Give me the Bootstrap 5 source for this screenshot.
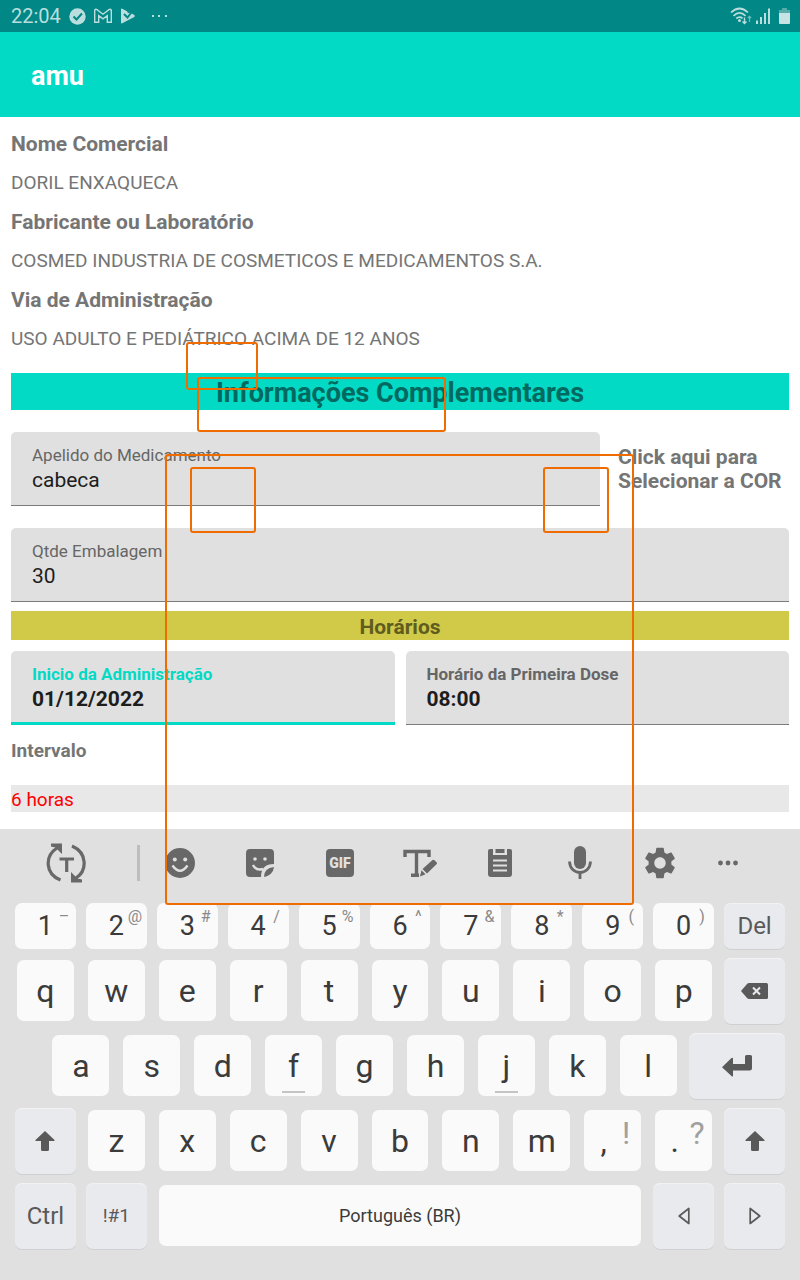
<!DOCTYPE html>
<html lang="pt-BR">
<head>
<meta charset="utf-8">
<meta name="viewport" content="width=device-width, initial-scale=1">
<title>amu</title>
<link href="https://cdn.jsdelivr.net/npm/bootstrap@5.3.0/dist/css/bootstrap.min.css" rel="stylesheet">
<style>
  body { font-family: Roboto, "Noto Sans", sans-serif; color: #757575; background: #fff; }
  svg { display: block; }
  .status-bar { height: 32px; background: #018786; color: #b9dedd; padding: 0 10px 0 11px; font-size: 20px; }
  .app-bar { height: 85px; background: #03dac5; padding: 2px 31px 0; color: #fff; }
  .app-title { font-size: 27px; line-height: 32px; font-weight: 700; }
  .page-body { padding: 7px 11px 17px; }
  .info-list dt { font-size: 21px; line-height: 39px; padding-top: 1px; font-weight: 700; }
  .info-list dd { font-size: 19px; line-height: 38px; margin: 0; }
  .banner-main { background: #03dac5; color: #01695f; font-size: 27px; line-height: 35px; padding-top: 3px; height: 37px; font-weight: 700; margin: 15px 0 22px; }
  .banner-sub { background: #d0ca48; color: #5f5c20; font-size: 21px; line-height: 29px; padding-top: 2px; height: 29px; font-weight: 700; margin: 9px 0 11px; }
  .filled { height: 74px; padding: 13px 21px 0; background: #e0e0e0; border-bottom: 1px solid #7b7b7b; border-radius: 5px 5px 0 0; min-width: 0; }
  .filled label { display: block; font-size: 17px; line-height: 20px; color: #666; white-space: nowrap; }
  .filled input { font-size: 21px; line-height: 30px; height: 30px; padding: 0; border: 0; border-radius: 0; background: transparent; color: #1d1d1d; }
  .filled input:focus { background: transparent; box-shadow: none; }
  .filled.strong label, .filled.strong input { font-weight: 700; }
  .filled.active { border-bottom: 3px solid #03dac5; }
  .filled.active label { color: #03dac5; }
  .name-row { gap: 18px; margin-bottom: 22px; }
  .name-field { flex: 1 1 0; }
  .color-link { flex: 0 0 171px; font-size: 21px; line-height: 24px; font-weight: 700; color: #757575; text-align: left; }
  .gap-field { gap: 11px; }
  .interval-label { display: block; font-size: 19px; line-height: 24px; font-weight: 700; margin: 14px 0 22px; }
  .interval-select { display: block; width: 100%; height: 27px; border: 0; padding: 2px 0 0; appearance: none; background: #e8e8e8; color: #f00; font-size: 19px; line-height: 25px; }

  .keyboard { background: #e0e0e0; padding-bottom: 26px; color: #3b3b3b; }
  .keyboard button { border: 0; padding: 0; color: inherit; background: transparent; }
  .tools { display: grid; grid-template-columns: 132fr 8fr repeat(7, 80fr) 56fr 44fr; height: 74px; padding-bottom: 6px; align-items: center; justify-items: center; color: #686868; }
  .tools-rule { width: 3px; height: 36px; background: #bdbdbd; justify-self: end; }
  .keys { display: grid; grid-template-columns: repeat(22, 1fr); grid-auto-rows: 75px; padding: 0 10px; }
  .keys-num { grid-auto-rows: 51px; }
  .keyboard .key { grid-column: span 2; position: relative; margin: 6px 7px 8px; border-radius: 7px; background: #fafafa; font-size: 32px; line-height: 40px; display: flex; align-items: center; justify-content: center; }
  .keyboard .keys-num .key { margin: 0 5px 5px; font-size: 27px; }
  .keyboard .key-fn { margin: 4px 5px 5px; background: #e9eaee; color: #595959; font-size: 24px; box-shadow: 0 1px 0 #cfd0d3, inset 0 1px 0 #f2f2f5; }
  .keyboard .keys-num .key-fn { font-size: 24px; }
  .keyboard .key-small { font-size: 19px; }
  .keyboard .key-space { grid-column: span 14; font-size: 18px; }
  .keyboard .key-enter { grid-column: span 3; }
  .keyboard .key-first { grid-column: 2 / span 2; }
  .keyboard .key-punct { padding-right: 18px; }
  .hint { position: absolute; top: 4px; right: 1px; width: 22px; text-align: center; font-size: 16px; line-height: 20px; color: #8a8a8a; }
  .key-punct .hint { top: 3px; right: 4px; font-size: 32px; line-height: 40px; color: #a0a0a0; }
  .home-mark::after { content: ""; position: absolute; left: 17px; right: 17px; bottom: 3px; height: 2px; background: #c4c4c4; }

  .region { position: absolute; border: 2px solid #ef6c00; border-radius: 3px; pointer-events: none; }
  .r1 { left: 186px; top: 342px; width: 72px; height: 48px; }
  .r2 { left: 197px; top: 377px; width: 249px; height: 55px; }
  .r3 { left: 165px; top: 454px; width: 469px; height: 451px; }
  .r4 { left: 190px; top: 467px; width: 66px; height: 66px; }
  .r5 { left: 543px; top: 467px; width: 66px; height: 66px; }
</style>
</head>
<body class="position-relative">

<header>
  <div class="status-bar d-flex align-items-center">
    <span>22:04</span>
    <svg class="ms-2" width="17" height="17" viewBox="0 0 17 17"><circle cx="8.500" cy="8.500" r="8.200" fill="#b9dedd"/><path d="M4.500 8.500l3 3 5.500-6" fill="none" stroke="#018786" stroke-width="2"/></svg>
    <svg class="ms-2" width="18" height="16" viewBox="0 0 18 16" fill="none" stroke="#b9dedd" stroke-width="1.400"><path d="M.7 14.300V2.200Q1.500.8 3 1.600L9 6.200 15 1.600Q16.500.8 17.300 2.200V14.300H13.300V7.600L9 10.900 4.700 7.600V14.300Z"/></svg>
    <svg class="ms-2" width="16" height="16" viewBox="0 0 16 16"><path d="M1 1.500Q1 0 2.300.8L7 3.200 8 5 10.500 4.800 14.300 7Q15.500 8 14.300 9L2.300 15.300Q1 16 1 14.500Z" fill="#b9dedd"/><path d="M4 6l3.500 3.500 5-6.500" fill="none" stroke="#018786" stroke-width="2"/></svg>
    <svg class="ms-3" width="16" height="4" viewBox="0 0 16 4" fill="#b9dedd"><path d="M0 1h2v2H0zM6 1h2v2H6zM13 1h2v2h-2z"/></svg>
    <svg class="ms-auto" width="22" height="18" viewBox="0 0 22 18" fill="none" stroke="#b9dedd" stroke-width="1.700"><path d="M1 5.500Q9.500-2.500 18 5.500M3.500 8.800Q9.500 3 15.500 8.800M6.300 11.500Q9.500 8.700 12.500 11.300"/><circle cx="9.500" cy="13.500" r="1.500" fill="#b9dedd" stroke="none"/><path d="M14.500 10.500v6M12.500 14.500l2 2 2-2" stroke-width="1.400"/><path d="M19.500 15V9.500M17.800 11l1.700-1.700L21.200 11" stroke="#6fbcba" stroke-width="1.200"/></svg>
    <svg class="ms-1" width="15" height="16" viewBox="0 0 15 16" fill="#b9dedd"><path d="M0 12.500h2V16H0zM4 9h2v7H4zM8 5h2v11H8zM12 .5h2V16h-2z"/></svg>
    <svg class="ms-2" width="11" height="18" viewBox="0 0 11 18"><path d="M3 1h5v2h3v4H0V3h3z" fill="#56acab"/><path d="M0 6h11v10q0 1-1 1H1q-1 0-1-1z" fill="#c6e4e4"/></svg>
  </div>
  <nav class="app-bar d-flex align-items-center"><h1 class="app-title m-0">amu</h1></nav>
</header>

<main class="page-body">
  <dl class="info-list m-0">
    <dt>Nome Comercial</dt><dd>DORIL ENXAQUECA</dd>
    <dt>Fabricante ou Laboratório</dt><dd>COSMED INDUSTRIA DE COSMETICOS E MEDICAMENTOS S.A.</dd>
    <dt>Via de Administração</dt><dd>USO ADULTO E PEDIÁTRICO ACIMA DE 12 ANOS</dd>
  </dl>
  <h2 class="banner-main text-center">Informações Complementares</h2>
  <form>
    <div class="d-flex align-items-center name-row">
      <div class="filled name-field"><label for="apelido">Apelido do Medicamento</label><input class="form-control" id="apelido" type="text" value="cabeca"></div>
      <button type="button" class="color-link btn p-0 border-0">Click aqui para<br>Selecionar a COR</button>
    </div>
    <div class="filled"><label for="qtde">Qtde Embalagem</label><input class="form-control" id="qtde" type="text" value="30"></div>
    <h3 class="banner-sub text-center">Horários</h3>
    <div class="d-flex gap-field">
      <div class="filled strong active flex-fill"><label for="inicio">Inicio da Administração</label><input class="form-control" id="inicio" type="text" value="01/12/2022"></div>
      <div class="filled strong flex-fill"><label for="hora">Horário da Primeira Dose</label><input class="form-control" id="hora" type="text" value="08:00"></div>
    </div>
    <label class="interval-label" for="intervalo">Intervalo</label>
    <select class="interval-select" id="intervalo"><option>6 horas</option></select>
  </form>
</main>

<section class="keyboard" aria-label="Teclado">
  <div class="tools">
    <button aria-label="Traduzir"><svg width="40" height="40" viewBox="0 0 40 40" fill="none" stroke="currentColor" stroke-width="3.200"><path d="M14.500 37C-1 31-1.500 13 11 5M26 3C42 10 41 28 30 35"/><path d="M5 .500H16V11L12.500 7.500 9.500 4.500 5 3.500ZM36 39.500H25V29L28.500 32.500 31.500 35.500 36 36.500Z" fill="currentColor" stroke="none"/><path d="M13.500 16H28M20.700 16V29"/></svg></button>
    <span class="tools-rule"></span>
    <button aria-label="Emoji"><svg width="30" height="30" viewBox="0 0 30 30"><circle cx="15" cy="15" r="15" fill="currentColor"/><circle cx="9.800" cy="11.500" r="2" fill="#e0e0e0"/><circle cx="20.200" cy="11.500" r="2" fill="#e0e0e0"/><path d="M7.500 17.500Q15 28 22.500 17.500" fill="none" stroke="#e0e0e0" stroke-width="2.500"/></svg></button>
    <button aria-label="Figurinhas"><svg width="28" height="28" viewBox="0 0 28 28"><path d="M4 0H24Q28 0 28 4V15Q15 15 15 28H4Q0 28 0 24V4Q0 0 4 0ZM28 18Q27 26 18 28Q18 19 28 18Z" fill="currentColor"/><circle cx="9" cy="10" r="1.800" fill="#e0e0e0"/><circle cx="19" cy="10" r="1.800" fill="#e0e0e0"/><path d="M7 16Q10 22 17 20" fill="none" stroke="#e0e0e0" stroke-width="2.500"/></svg></button>
    <button aria-label="GIF"><svg width="28" height="28" viewBox="0 0 28 28"><rect width="28" height="28" rx="4" fill="currentColor"/><text x="14" y="19" text-anchor="middle" font-family="Roboto, sans-serif" font-size="14" font-weight="900" fill="#e0e0e0">GIF</text></svg></button>
    <button aria-label="Editar texto"><svg width="34" height="28" viewBox="0 0 34 28"><path d="M2 8V2.500H26V8M13.500 2V26M8 26.200H16" fill="none" stroke="currentColor" stroke-width="3.400"/><path d="M29.500 11q1-.8 2 .2l2 2q1 1 0 2L24 24.500 19.500 20ZM18.500 21.300l4 4L17 27.500Z" fill="currentColor"/></svg></button>
    <button aria-label="Área de transferência"><svg width="24" height="28" viewBox="0 0 24 28"><path d="M2 0H5V6H19V0H22Q24 0 24 2V25Q24 28 21 28H3Q0 28 0 25V2Q0 0 2 0ZM7.500 0h9v4h-9z" fill="currentColor"/><path d="M5 11.500H19M5 16.500H19M5 21.500H19" stroke="#e0e0e0" stroke-width="2"/></svg></button>
    <button aria-label="Voz"><svg width="24" height="34" viewBox="0 0 24 34"><rect x="6" y="0" width="12" height="23" rx="6" fill="currentColor"/><path d="M1.500 15.500C2 30 22 30 22.500 15.500M12 26v7" fill="none" stroke="currentColor" stroke-width="2.800"/></svg></button>
    <button aria-label="Configurações"><svg width="38" height="38" viewBox="0 0 24 24"><path d="M19.140 12.940c.04-.3.060-.61.060-.94 0-.32-.02-.64-.07-.94l2.030-1.580c.18-.14.230-.41.120-.61l-1.920-3.320c-.12-.22-.37-.29-.59-.22l-2.390.96c-.5-.38-1.030-.7-1.620-.94l-.36-2.540c-.04-.24-.24-.41-.48-.41h-3.840c-.24 0-.43.170-.47.410l-.36 2.540c-.59.240-1.130.57-1.620.94l-2.390-.96c-.22-.08-.47 0-.59.220L2.740 8.870c-.12.210-.08.470.120.610l2.030 1.580c-.05.3-.09.630-.09.940s.02.640.070.940l-2.030 1.580c-.18.140-.23.410-.12.610l1.920 3.320c.12.220.37.290.59.220l2.390-.96c.5.380 1.030.7 1.620.94l.36 2.540c.05.240.24.410.48.410h3.840c.24 0 .44-.17.470-.41l.36-2.540c.59-.24 1.130-.56 1.620-.94l2.390.96c.22.080.470 0 .59-.22l1.920-3.320c.12-.22.070-.47-.12-.61l-2.010-1.580zM12 15.600c-1.980 0-3.600-1.620-3.600-3.600s1.620-3.600 3.600-3.600 3.600 1.620 3.600 3.600-1.620 3.600-3.600 3.600z" fill="currentColor"/></svg></button>
    <button aria-label="Mais"><svg width="20" height="6" viewBox="0 0 20 6" fill="currentColor"><circle cx="2.500" cy="3" r="2.400"/><circle cx="10" cy="3" r="2.400"/><circle cx="17.500" cy="3" r="2.400"/></svg></button>
  </div>
  <div class="keys keys-num">
    <button class="key">1<span class="hint">–</span></button>
    <button class="key">2<span class="hint">@</span></button>
    <button class="key">3<span class="hint">#</span></button>
    <button class="key">4<span class="hint">/</span></button>
    <button class="key">5<span class="hint">%</span></button>
    <button class="key">6<span class="hint">^</span></button>
    <button class="key">7<span class="hint">&amp;</span></button>
    <button class="key">8<span class="hint">*</span></button>
    <button class="key">9<span class="hint">(</span></button>
    <button class="key">0<span class="hint">)</span></button>
    <button class="key key-fn">Del</button>
  </div>
  <div class="keys">
    <button class="key">q</button><button class="key">w</button><button class="key">e</button><button class="key">r</button><button class="key">t</button><button class="key">y</button><button class="key">u</button><button class="key">i</button><button class="key">o</button><button class="key">p</button>
    <button class="key key-fn" aria-label="Apagar"><svg width="27" height="16" viewBox="0 0 27 16"><path d="M6 1Q7 0 8 0H25.500Q27 0 27 1.500V14.500Q27 16 25.500 16H8Q7 16 6 15L0 8Z" fill="currentColor"/><path d="M12 4.500l7 7M19 4.500l-7 7" stroke="#e9eaee" stroke-width="2"/></svg></button>
    <button class="key key-first">a</button><button class="key">s</button><button class="key">d</button><button class="key home-mark">f</button><button class="key">g</button><button class="key">h</button><button class="key home-mark">j</button><button class="key">k</button><button class="key">l</button>
    <button class="key key-fn key-enter" aria-label="Enter"><svg width="30" height="22" viewBox="0 0 30 22"><path d="M11 3.500V9H23V1.500Q23 0 24.500 0H28.500Q30 0 30 1.500V13Q30 15.500 27.500 15.500H11V21Q10.500 22 9.500 21L0 12.300 9.500 3Q10.500 2.500 11 3.500Z" fill="currentColor"/></svg></button>
    <button class="key key-fn" aria-label="Maiúsculas"><svg width="20" height="20" viewBox="0 0 20 20"><path d="M10 0L19.500 9Q20 10 19 10H14V18.500Q14 20 12.500 20H7.500Q6 20 6 18.500V10H1Q0 10 .5 9Z" fill="currentColor"/></svg></button>
    <button class="key">z</button><button class="key">x</button><button class="key">c</button><button class="key">v</button><button class="key">b</button><button class="key">n</button><button class="key">m</button>
    <button class="key key-punct">,<span class="hint">!</span></button>
    <button class="key key-punct">.<span class="hint">?</span></button>
    <button class="key key-fn" aria-label="Maiúsculas"><svg width="20" height="20" viewBox="0 0 20 20"><path d="M10 0L19.500 9Q20 10 19 10H14V18.500Q14 20 12.500 20H7.500Q6 20 6 18.500V10H1Q0 10 .5 9Z" fill="currentColor"/></svg></button>
    <button class="key key-fn">Ctrl</button>
    <button class="key key-fn key-small">!#1</button>
    <button class="key key-space">Português (BR)</button>
    <button class="key key-fn" aria-label="Esquerda"><svg width="12" height="18" viewBox="0 0 12 18"><path d="M10.800 1.500V16.500L1.200 9Z" fill="none" stroke="currentColor" stroke-width="1.700" stroke-linejoin="round"/></svg></button>
    <button class="key key-fn" aria-label="Direita"><svg width="12" height="18" viewBox="0 0 12 18"><path d="M1.200 1.500V16.500L10.800 9Z" fill="none" stroke="currentColor" stroke-width="1.700" stroke-linejoin="round"/></svg></button>
  </div>
</section>

<div class="region r1"></div>
<div class="region r2"></div>
<div class="region r3"></div>
<div class="region r4"></div>
<div class="region r5"></div>

<script src="https://cdn.jsdelivr.net/npm/bootstrap@5.3.0/dist/js/bootstrap.bundle.min.js"></script>
</body>
</html>
